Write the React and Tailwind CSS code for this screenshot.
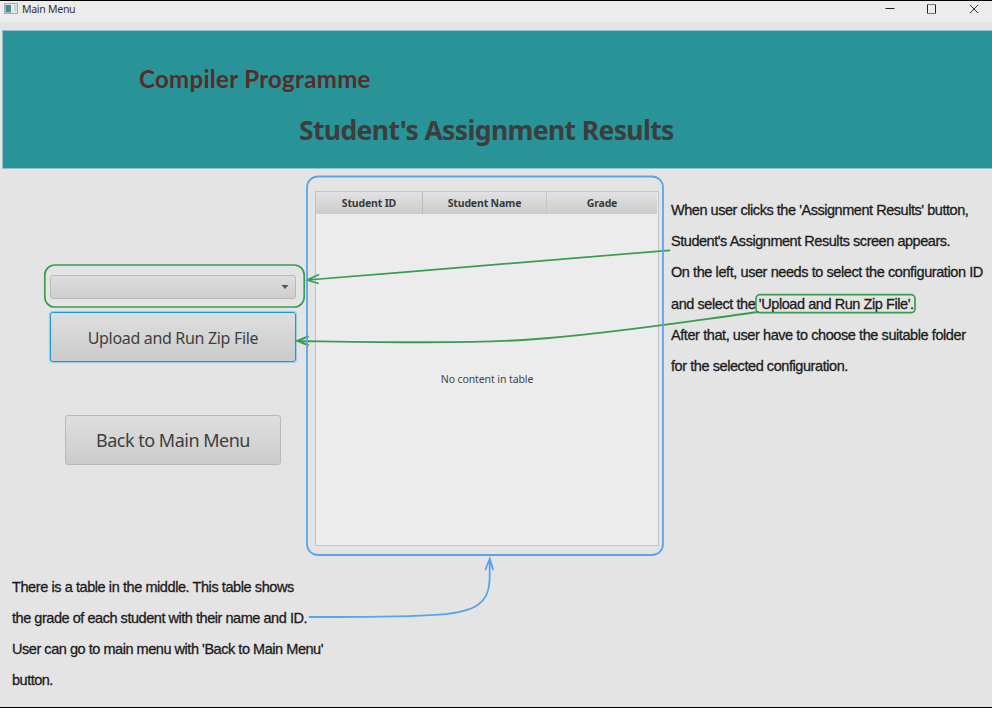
const segoe = "font-['Noto_Sans',sans-serif]";

function AppIcon() {
  return (
    <svg className="ml-1 h-3 w-3.5 shrink-0" viewBox="0 0 14 12">
      <defs>
        <linearGradient id="pane" x1="0" y1="0" x2="1" y2="1">
          <stop offset="0" stopColor="#3f7fa6" />
          <stop offset="1" stopColor="#4f9e78" />
        </linearGradient>
      </defs>
      <rect x="0.5" y="0.5" width="13" height="10" fill="#e6e8e8" stroke="#a9a9ae" />
      <rect x="1.500" y="2" width="5.500" height="7.500" fill="url(#pane)" />
      <rect x="10.500" y="2" width="2" height="6" fill="#b9d9c6" />
    </svg>
  );
}

function TitleBar() {
  return (
    <header className={`flex h-[22px] items-start border-t border-black bg-[#ececec] ${segoe}`}>
      <div className="flex h-[16px] items-center">
        <AppIcon />
        <span className="ml-1 text-[10.5px] leading-[17px] tracking-[-0.27px] text-[#333]">Main Menu</span>
      </div>
      <svg className="ml-auto h-4 w-[112px]" viewBox="0 0 112 16" fill="none" stroke="#222">
        <path d="M5.500 7.500h9" />
        <path d="M47.500 3v10M55.500 3v10" />
        <path d="M47 3.500h9M47 12.500h9" stroke="#777" />
        <path d="M90 4l8 8M98 4l-8 8" stroke="#333" />
      </svg>
    </header>
  );
}

function Banner() {
  return (
    <section className="ml-0.5 mt-2 h-[139px] border-y border-l border-[#8fc3c5] bg-[#289498]">
      <h1 className="ml-[136px] mt-[33px] whitespace-nowrap font-['Lato',sans-serif] text-[24px] font-bold leading-[30px] tracking-[0.32px] text-[#5a2a2a]">
        Compiler Programme
      </h1>
      <h2 className={`ml-[296px] mt-[17px] whitespace-nowrap text-[26.5px] font-bold leading-[38px] tracking-[-0.62px] text-[#3d3d3d] ${segoe}`}>
        Student&#39;s Assignment Results
      </h2>
    </section>
  );
}

function Controls() {
  return (
    <aside className={`flex w-[315px] shrink-0 flex-col pt-[106px] ${segoe}`}>
      <button className="ml-[50px] flex h-6 w-[246px] items-center justify-end rounded-[3px] border border-[#b9b9b9] bg-linear-to-b from-[#dedede] to-[#cecece] pr-1.5">
        <svg className="h-1 w-2" viewBox="0 0 8 4">
          <path d="M0.500 0h7L4 4z" fill="#555" />
        </svg>
      </button>
      <button className="ml-[50px] mt-[13px] h-[50px] w-[246px] whitespace-nowrap rounded-[3px] border border-[#1c9bd0] bg-linear-to-b from-[#dfdfdf] to-[#cbcbcb] pt-0.5 text-[16px] tracking-[-0.32px] text-[#3f3f3f] shadow-[0_0_1px_1px_#8fcce4]">
        Upload and Run Zip File
      </button>
      <button className="ml-[65px] mt-[53px] h-[50px] w-[216px] whitespace-nowrap rounded-[3px] border border-[#b9b9b9] bg-linear-to-b from-[#dfdfdf] to-[#cbcbcb] text-[18px] tracking-[-0.5px] text-[#3f3f3f]">
        Back to Main Menu
      </button>
    </aside>
  );
}

function ResultsTable() {
  return (
    <section className={`mt-[22px] flex h-[355px] w-[344px] shrink-0 flex-col border border-[#c4c4c4] bg-[#ececec] ${segoe}`}>
      <div className="mr-px flex h-[22px] bg-linear-to-b from-[#e2e2e2] to-[#cccccc] text-center text-[10.5px] font-bold leading-[22px] tracking-[-0.17px] text-[#3a3a3a]">
        <span className="w-[107px] border-r border-[#bdbdbd]">Student ID</span>
        <span className="w-[124px] border-r border-[#c6c6c6]">Student Name</span>
        <span className="flex-1">Grade</span>
      </div>
      <p className="mt-[155px] text-center text-[10.5px] leading-5 tracking-[-0.1px] text-[#444]">No content in table</p>
    </section>
  );
}

const noteText =
  "whitespace-nowrap font-['Liberation_Sans',Arial,sans-serif] text-[14.5px] text-[#1c1c1c] [-webkit-text-stroke:0.3px_#1c1c1c]";

function UsageNote() {
  return (
    <div className={`ml-3 mt-[26px] leading-[31.2px] ${noteText}`}>
      <p className="tracking-[-0.46px]">When user clicks the &#39;Assignment Results&#39; button,</p>
      <p className="tracking-[-0.46px]">Student&#39;s Assignment Results screen appears.</p>
      <p className="tracking-[-0.42px]">On the left, user needs to select the configuration ID</p>
      <p className="tracking-[-0.43px]">and select the &#39;Upload and Run Zip File&#39;.</p>
      <p className="tracking-[-0.42px]">After that, user have to choose the suitable folder</p>
      <p className="tracking-[-0.43px]">for the selected configuration.</p>
    </div>
  );
}

function TableNote() {
  return (
    <div className={`ml-3 leading-[31.15px] ${noteText}`}>
      <p className="tracking-[-0.42px]">There is a table in the middle. This table shows</p>
      <p className="tracking-[-0.46px]">the grade of each student with their name and ID.</p>
      <p className="tracking-[-0.46px]">User can go to main menu with &#39;Back to Main Menu&#39;</p>
      <p className="tracking-[-0.5px]">button.</p>
    </div>
  );
}

function Annotations() {
  return (
    <svg className="pointer-events-none absolute left-0 top-0 h-[708px] w-[992px]" viewBox="0 0 992 708" fill="none" strokeLinecap="round">
      <g stroke="#3a9d4e" strokeWidth="1.700">
        <rect x="44.800" y="265" width="259.400" height="42" rx="10" />
        <rect x="756" y="294.700" width="159" height="18" rx="4" />
        <path d="M669.500 250.300C560 260 430 270 307 280M318.500 274.800L307 280l11 3.300" />
        <path d="M758 312C690 321 610 334 530 339.500C460 344 370 342 297 341M308 336.500L297 341l11 4" strokeWidth="1.900" />
      </g>
      <g stroke="#5aa5ea" strokeWidth="1.800">
        <rect x="307" y="176.500" width="356" height="378.500" rx="11" />
        <path d="M309.500 617C350 617 400 617.500 439 614.700C476 612 488.500 603 489.500 581C490 573 489.500 566 489.800 558.500M485.500 569.500L489.800 558.500l3.200 11" />
      </g>
    </svg>
  );
}

export default function App() {
  return (
    <main className="relative flex h-[708px] w-[992px] flex-col overflow-hidden border-b border-black bg-[#e4e4e4]">
      <TitleBar />
      <Banner />
      <div className="flex h-[403px] shrink-0">
        <Controls />
        <ResultsTable />
        <UsageNote />
      </div>
      <TableNote />
      <Annotations />
    </main>
  );
}
